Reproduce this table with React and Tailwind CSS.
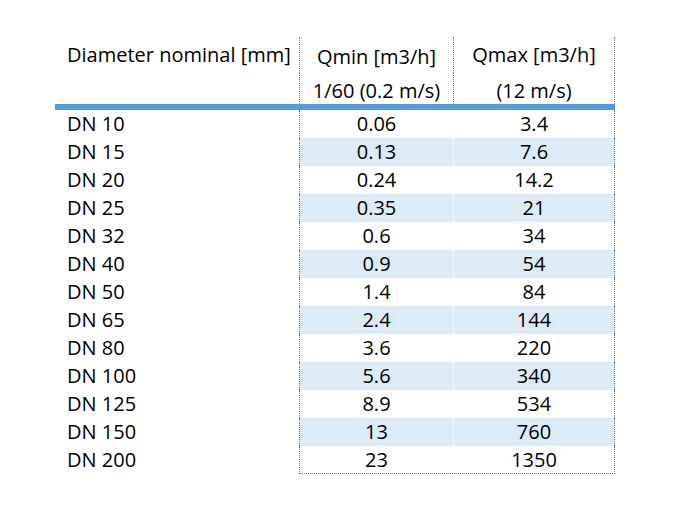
import React from "react";

const rows = [
  ["DN 10", "0.06", "3.4"],
  ["DN 15", "0.13", "7.6"],
  ["DN 20", "0.24", "14.2"],
  ["DN 25", "0.35", "21"],
  ["DN 32", "0.6", "34"],
  ["DN 40", "0.9", "54"],
  ["DN 50", "1.4", "84"],
  ["DN 65", "2.4", "144"],
  ["DN 80", "3.6", "220"],
  ["DN 100", "5.6", "340"],
  ["DN 125", "8.9", "534"],
  ["DN 150", "13", "760"],
  ["DN 200", "23", "1350"],
];

export default function App() {
  return (
    <div className="w-[692px] h-[512px] bg-white text-black font-['Open_Sans',sans-serif] text-[20px] leading-none">
      <div className="pt-[37px] pl-[55px]">
        <div className="grid grid-cols-[244px_154px_162px] w-[560px]">
          {/* Header */}
          <div className="h-[36px] flex items-center pl-[12px] font-medium">Diameter nominal [mm]</div>
          <div className="h-[36px] flex items-center justify-center pt-[3px] font-medium border-l border-dotted border-gray-500">Qmin [m3/h]</div>
          <div className="h-[36px] flex items-center justify-center font-medium border-l border-r border-dotted border-gray-500">Qmax [m3/h]</div>

          <div className="h-[31px]"></div>
          <div className="h-[31px] flex items-center justify-center pt-[4px] border-l border-dotted border-gray-500">1/60 (0.2 m/s)</div>
          <div className="h-[31px] flex items-center justify-center pt-[4px] border-l border-r border-dotted border-gray-500">(12 m/s)</div>

          <div className="col-span-3 h-[6px] bg-[#5b9bd5]"></div>

          {/* Data rows */}
          {rows.map(([dn, qmin, qmax], i) => {
            const shade = i % 2 === 1 ? "bg-[#ddebf7]" : "bg-white";
            const last = i === rows.length - 1 ? "border-b border-dotted border-b-gray-500" : "";
            return (
              <React.Fragment key={dn}>
                <div className="h-[28px] flex items-center pl-[12px]">{dn}</div>
                <div className={`h-[28px] flex items-center justify-center border-l border-dotted border-l-gray-500 ${shade} ${last}`}>{qmin}</div>
                <div className={`h-[28px] flex items-center justify-center border-l border-l-white border-r border-dotted border-r-gray-500 ${shade} ${last}`}>{qmax}</div>
              </React.Fragment>
            );
          })}
        </div>
      </div>
    </div>
  );
}
